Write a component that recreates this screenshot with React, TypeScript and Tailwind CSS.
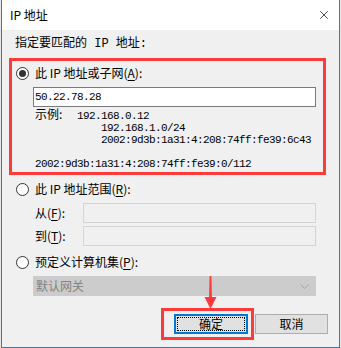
import { X } from "lucide-react";

const ui = { fontFamily: '"Noto Sans CJK SC", "Noto Sans", sans-serif' };
const mono = { fontFamily: '"Liberation Mono", "Noto Sans CJK SC", monospace' };

function Radio({ checked }: { checked?: boolean }) {
  return (
    <span className="flex h-[13px] w-[13px] shrink-0 items-center justify-center rounded-full border border-[#333] bg-white">
      {checked && <span className="h-[7px] w-[7px] rounded-full bg-[#333]" />}
    </span>
  );
}

function Key({ k }: { k: string }) {
  return (
    <>
      (<span className="underline underline-offset-2">{k}</span>):
    </>
  );
}

export default function App() {
  return (
    <div className="h-[348px] w-[341px] bg-[#e6e6e6] px-px text-[12px] text-black" style={ui}>
      <div className="relative flex h-[348px] w-[339px] flex-col border-x border-b border-[#1883d7] bg-[#f0f0f0]">
        {/* title bar */}
        <div className="flex h-[30px] shrink-0 items-center justify-between bg-white pl-2 pr-[8px]">
          <span className="leading-4">IP 地址</span>
          <X className="h-[14px] w-[14px] text-black" strokeWidth={1.2} />
        </div>

        <div className="ml-[13px] mt-[6px] h-4 leading-4" style={mono}>
          指定要匹配的 IP 地址:
        </div>

        {/* subnet group, marked in red */}
        <div className="ml-[7px] mt-[6px] h-[117px] w-[317px] border-[3px] border-[#fe3b3b]">
          <div className="ml-1 mt-1 flex h-4 items-center gap-[6px]">
            <Radio checked />
            <span className="leading-4">
              此 IP 地址或子网<Key k="A" />
            </span>
          </div>
          <div className="ml-[21px] mt-[6px] flex h-5 w-[283px] items-center border border-[#7a7a7a] bg-white pl-[1px] text-[11px] tracking-[-0.6px]" style={mono}>
            50.22.78.28
          </div>
          <div className="ml-[23px] mt-[1px] grid grid-cols-[42px_1fr] items-baseline text-[11px] leading-[12px] tracking-[-0.6px]" style={mono}>
            <span className="text-[12px] tracking-normal" style={ui}>
              示例:
            </span>
            <span>192.168.0.12</span>
            <span />
            <span className="pl-6">192.168.1.0/24</span>
            <span />
            <span className="pl-6">2002:9d3b:1a31:4:208:74ff:fe39:6c43</span>
            <span className="col-span-2 h-3" />
            <span className="col-span-2">2002:9d3b:1a31:4:208:74ff:fe39:0/112</span>
          </div>
        </div>

        {/* range */}
        <div className="ml-[14px] mt-[6px] flex h-4 items-center gap-[6px]">
          <Radio />
          <span className="leading-4">
            此 IP 地址范围<Key k="R" />
          </span>
        </div>
        <div className="ml-[33px] mt-[6px] flex items-center">
          <span className="w-12 leading-4">
            从<Key k="F" />
          </span>
          <div className="h-5 w-[233px] border border-[#d4d4d4] bg-[#f0f0f0]" />
        </div>
        <div className="ml-[33px] mt-[3px] flex items-center">
          <span className="w-12 leading-4">
            到<Key k="T" />
          </span>
          <div className="h-5 w-[233px] border border-[#d4d4d4] bg-[#f0f0f0]" />
        </div>

        {/* predefined */}
        <div className="ml-[14px] mt-[8px] flex h-4 items-center gap-[6px]">
          <Radio />
          <span className="leading-4">
            预定义计算机集<Key k="P" />
          </span>
        </div>
        <div className="ml-[31px] mt-[6px] flex h-5 w-[283px] items-center justify-between border border-[#cccccc] bg-[#cccccc] pl-[2px] pr-[6px] text-[#838383]">
          <span className="leading-4">默认网关</span>
          <svg width="9" height="5" viewBox="0 0 9 5" fill="none" stroke="#a5a5a5" strokeWidth="1">
            <path d="M0.5 0.5 L4.5 4.5 L8.5 0.5" />
          </svg>
        </div>

        {/* buttons */}
        <div className="mt-[18px] flex justify-end gap-[7px] pr-[11px]">
          <button className="flex h-5 w-[74px] items-center justify-center border-2 border-[#0078d7] bg-[#e1e1e1] p-px">
            <span className="flex h-full w-full items-center justify-center border border-dotted border-black leading-4">
              确定
            </span>
          </button>
          <button className="flex h-5 w-[73px] items-center justify-center border border-[#adadad] bg-[#e1e1e1] leading-4">
            取消
          </button>
        </div>

        {/* annotation overlays */}
        <div className="absolute left-[159px] top-[308px] h-[32px] w-[93px] border-[3px] border-[#fe3b3b]" />
        <svg className="absolute left-[202px] top-[276px]" width="13" height="33" viewBox="0 0 13 33">
          <path d="M5.6 0 L7.4 0 L8 23 L5 23 Z" fill="#fe3b3b" />
          <path d="M0.5 21 L12.5 21 L6.5 33 Z" fill="#fe3b3b" />
        </svg>
      </div>
    </div>
  );
}
